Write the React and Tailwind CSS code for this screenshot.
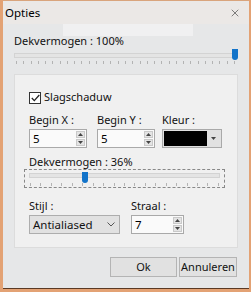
import { X } from "lucide-react";

const font = { fontFamily: '"Noto Sans", "Open Sans", sans-serif' };

function Ticks({ count }) {
  return (
    <div className="flex justify-between">
      {Array.from({ length: count }).map((_, i) => (
        <span key={i} className="block w-px h-[3px] bg-[#b3b3b3]" />
      ))}
    </div>
  );
}

function Spin({ value, width }) {
  return (
    <div className={`flex h-[19px] ${width} border border-[#a9a9a9] bg-[#fafafa]`}>
      <span className="flex-1 pl-[3px] text-[11.5px] leading-[17px] text-black">{value}</span>
      <div className="flex flex-col w-[9px] my-px mr-px gap-px">
        <span className="flex-1 flex items-center justify-center bg-[#e4e4e4] border border-[#c9c9c9]">
          <svg width="5" height="3" viewBox="0 0 5 3"><path d="M0 3 L2.5 0 L5 3Z" fill="#444" /></svg>
        </span>
        <span className="flex-1 flex items-center justify-center bg-[#e4e4e4] border border-[#c9c9c9]">
          <svg width="5" height="3" viewBox="0 0 5 3"><path d="M0 0 L2.5 3 L5 0Z" fill="#444" /></svg>
        </span>
      </div>
    </div>
  );
}

export default function App() {
  return (
    <div
      className="relative w-[251px] h-[292px] overflow-hidden bg-[#e6e7e8] border-l-[3px] border-r-[2px] border-b-[3px] border-[#e3a274] text-[11px] text-[#111]"
      style={font}
    >
      <div className="absolute left-[60px] top-0 w-[130px] h-[36px] bg-white/40" />
      <div className="relative flex flex-col h-full border-b border-[#5a3a24]">
        <div className="flex items-center justify-between h-[24px] pl-[2px] pr-[8px] bg-[#ebe8e6] border-t border-[#d9a47c]">
          <span className="text-[11.5px] text-black">Opties</span>
          <X className="w-[12px] h-[12px] text-[#333]" strokeWidth={1.2} />
        </div>

        <div className="flex flex-col pl-[11px] pr-[11px] pt-[10px]">
          <span className="leading-[14px]">Dekvermogen : 100%</span>
          <div className="relative mt-[1px] pr-[1px]">
            <div className="h-[5px] mt-[4px] bg-[#e4e4e4] border border-[#d3d3d3]" />
            <span className="absolute right-[0px] top-0 w-[6px] h-[11px] bg-[#1273c9] rounded-b-[3px]" />
            <div className="mt-[3px] px-[2px]">
              <Ticks count={31} />
            </div>
          </div>

          <div className="mt-[10px] h-[174px] bg-[#f0f0f0] border border-[#dcdcdc] pl-[14px] pr-[10px] pt-[16px]">
            <div className="flex items-center gap-[3px] h-[13px]">
              <span className="flex items-center justify-center w-[12px] h-[12px] border border-[#333] bg-white">
                <svg width="9" height="8" viewBox="0 0 9 8">
                  <path d="M0.8 4 L3.3 6.6 L8.3 1" fill="none" stroke="#222" strokeWidth="1.3" />
                </svg>
              </span>
              <span>Slagschaduw</span>
            </div>

            <div className="flex gap-[10px] mt-[9px]">
              <div className="flex flex-col">
                <span className="leading-[14px]">Begin X :</span>
                <div className="mt-[2px]">
                  <Spin value="5" width="w-[58px]" />
                </div>
              </div>
              <div className="flex flex-col">
                <span className="leading-[14px]">Begin Y :</span>
                <div className="mt-[2px]">
                  <Spin value="5" width="w-[58px]" />
                </div>
              </div>
              <div className="flex flex-col ml-[-3px]">
                <span className="leading-[14px]">Kleur :</span>
                <div className="mt-[2px] flex h-[19px] w-[60px] border border-[#a9a9a9] bg-[#e1e1e1] p-px">
                  <span className="w-[43px] bg-black" />
                  <span className="flex-1 flex items-center justify-center">
                    <svg width="5" height="3" viewBox="0 0 5 3"><path d="M0 0 L2.5 3 L5 0Z" fill="#444" /></svg>
                  </span>
                </div>
              </div>
            </div>

            <span className="block mt-[7px] leading-[14px]">Dekvermogen : 36%</span>
            <div className="relative ml-[-5px] w-[201px] h-[19px] border border-dashed border-[#888] px-[4px]">
              <div className="h-[5px] mt-[3px] bg-[#e4e4e4] border border-[#d3d3d3]" />
              <span className="absolute left-[57px] top-[2px] w-[6px] h-[11px] bg-[#1273c9] rounded-b-[3px]" />
              <div className="mt-[5px] px-[1px]">
                <Ticks count={19} />
              </div>
            </div>

            <div className="flex gap-[11px] mt-[11px]">
              <div className="flex flex-col">
                <span className="leading-[14px]">Stijl :</span>
                <div className="mt-[2px] flex items-center justify-between h-[19px] w-[91px] border border-[#adadad] bg-[#e1e1e1] pl-[3px] pr-[4px]">
                  <span className="text-[11.5px]">Antialiased</span>
                  <svg width="8" height="5" viewBox="0 0 8 5">
                    <path d="M0.5 0.5 L4 4 L7.5 0.5" fill="none" stroke="#555" strokeWidth="1" />
                  </svg>
                </div>
              </div>
              <div className="flex flex-col">
                <span className="leading-[14px]">Straal :</span>
                <div className="mt-[2px]">
                  <Spin value="7" width="w-[53px]" />
                </div>
              </div>
            </div>
          </div>

          <div className="flex justify-end gap-[2px] mt-[9px] pr-[1px]">
            <button className="w-[67px] h-[20px] bg-[#e1e1e1] border border-[#b4b4b4] text-[11px]">Ok</button>
            <button className="w-[58px] h-[20px] bg-[#e1e1e1] border border-[#b4b4b4] text-[11px]">Annuleren</button>
          </div>
        </div>
      </div>
    </div>
  );
}
